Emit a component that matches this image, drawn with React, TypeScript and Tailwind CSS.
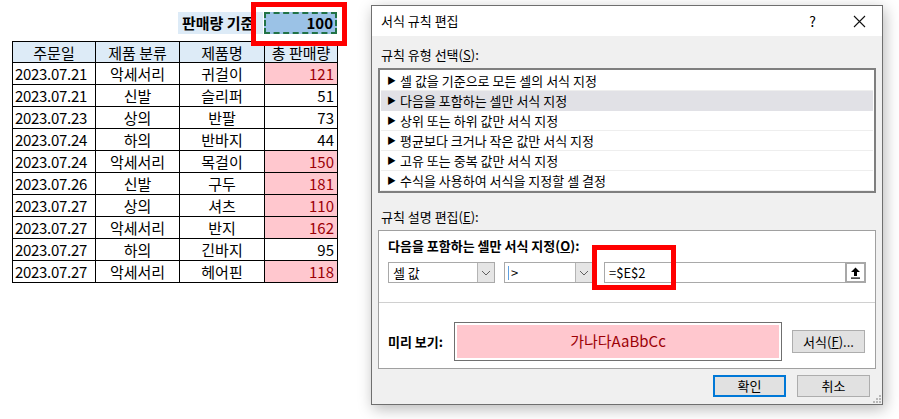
const rows = [
  { date: '2023.07.21', cat: '악세서리', name: '귀걸이', qty: 121 },
  { date: '2023.07.21', cat: '신발', name: '슬리퍼', qty: 51 },
  { date: '2023.07.23', cat: '상의', name: '반팔', qty: 73 },
  { date: '2023.07.24', cat: '하의', name: '반바지', qty: 44 },
  { date: '2023.07.24', cat: '악세서리', name: '목걸이', qty: 150 },
  { date: '2023.07.26', cat: '신발', name: '구두', qty: 181 },
  { date: '2023.07.27', cat: '상의', name: '셔츠', qty: 110 },
  { date: '2023.07.27', cat: '악세서리', name: '반지', qty: 162 },
  { date: '2023.07.27', cat: '하의', name: '긴바지', qty: 95 },
  { date: '2023.07.27', cat: '악세서리', name: '헤어핀', qty: 118 },
];

const ruleTypes = [
  '셀 값을 기준으로 모든 셀의 서식 지정',
  '다음을 포함하는 셀만 서식 지정',
  '상위 또는 하위 값만 서식 지정',
  '평균보다 크거나 작은 값만 서식 지정',
  '고유 또는 중복 값만 서식 지정',
  '수식을 사용하여 서식을 지정할 셀 결정',
];

const THRESHOLD = 100;

function Chevron() {
  return (
    <svg width="10" height="6" viewBox="0 0 10 6" fill="none">
      <path d="M1 1 L5 5 L9 1" stroke="#606060" strokeWidth="1" />
    </svg>
  );
}

function Select({ value, width }: { value: string; width: string }) {
  return (
    <div className={`${width} h-[21px] flex items-stretch border border-[#a9a9a9] bg-white`}>
      <div className="flex-1 flex items-center pl-[4px] text-[13px]">{value}</div>
      <div className="w-[17px] bg-[#e5e5e5] border-l border-[#b4b4b4] flex items-center justify-center">
        <Chevron />
      </div>
    </div>
  );
}

function Sheet() {
  return (
    <div className="w-[371px] shrink-0 pt-[12px] pl-[12px] relative">
      {/* E2 criteria row */}
      <div className="flex h-[22px]">
        <div className="w-[166px]" />
        <div className="w-[85px] bg-[#ddebf7] flex items-center pl-[4px] font-bold text-[15px] whitespace-nowrap overflow-hidden">
          판매량 기준
        </div>
        <div className="w-[73px] ml-[1px] border-2 border-dashed border-[#217346] bg-[#9bc2e6] flex items-center justify-end pr-[2px] font-bold text-[15px]">
          100
        </div>
      </div>

      <table className="mt-[7px] border-collapse table-fixed w-[325px] text-[15px] leading-none">
        <colgroup>
          <col className="w-[83px]" />
          <col className="w-[84px]" />
          <col className="w-[85px]" />
          <col className="w-[73px]" />
        </colgroup>
        <thead>
          <tr className="h-[21px] bg-[#ddebf7]">
            {['주문일', '제품 분류', '제품명', '총 판매량'].map((h) => (
              <th key={h} className="border border-black font-normal text-center p-0">
                {h}
              </th>
            ))}
          </tr>
        </thead>
        <tbody>
          {rows.map((r, i) => {
            const hit = r.qty > THRESHOLD;
            return (
              <tr key={i} className="h-[22px]">
                <td className="border border-black pl-[2px] p-0 tracking-[-0.3px]">{r.date}</td>
                <td className="border border-black text-center p-0">{r.cat}</td>
                <td className="border border-black text-center p-0">{r.name}</td>
                <td
                  className={`border border-black text-right pr-[3px] p-0 ${
                    hit ? 'bg-[#ffc7ce] text-[#9c0006]' : ''
                  }`}
                >
                  {r.qty}
                </td>
              </tr>
            );
          })}
        </tbody>
      </table>

      {/* highlight on criteria cell */}
      <div className="absolute left-[251px] top-[2px] w-[96px] h-[44px] border-[5px] border-[#ff0000]" />
    </div>
  );
}

function Dialog() {
  return (
    <div className="w-[512px] h-[400px] mt-[5px] border border-[#6f6f6f] bg-[#f0f0f0] shadow-[2px_4px_14px_rgba(0,0,0,0.28)] flex flex-col text-[13px] text-black relative">
      {/* title bar */}
      <div className="h-[30px] bg-white flex items-center pl-[9px] shrink-0">
        <span>서식 규칙 편집</span>
        <span className="ml-auto mr-[37px] text-[14px]">?</span>
        <svg width="13" height="13" viewBox="0 0 13 13" className="mr-[16px]">
          <path d="M1 1 L12 12 M12 1 L1 12" stroke="#111" strokeWidth="1.1" />
        </svg>
      </div>

      <div className="flex-1 flex flex-col px-[6px]">
        <div className="pl-[3px] mt-[10px] h-[18px] flex items-center">
          규칙 유형 선택(<u>S</u>):
        </div>

        {/* rule type list */}
        <div className="mt-[4px] h-[125px] border-2 border-[#7f7f7f] bg-white pt-[1px] px-[1px]">
          {ruleTypes.map((t, i) => (
            <div
              key={t}
              className={`h-[20px] flex items-center pl-[6px] ${
                i === 1 ? 'bg-[#e1e1e6]' : 'border-b border-[#eeeeee]'
              }`}
            >
              <span className="text-[9px] mr-[4px]">▶</span>
              <span>{t}</span>
            </div>
          ))}
        </div>

        <div className="pl-[3px] mt-[15px] h-[18px] flex items-center">
          규칙 설명 편집(<u>E</u>):
        </div>

        {/* rule description box */}
        <div className="mt-[4px] h-[139px] border border-[#a0a0a0] bg-white flex flex-col">
          <div className="pl-[9px] mt-[6px] h-[18px] flex items-center font-bold">
            다음을 포함하는 셀만 서식 지정(<u>O</u>):
          </div>
          <div className="flex items-center mt-[7px] pl-[9px] h-[21px]">
            <Select value="셀 값" width="w-[107px]" />
            <div className="ml-[9px] w-[89px] h-[21px] flex items-stretch border border-[#a9a9a9] bg-white">
              <div className="flex-1 flex items-center pl-[3px]">
                <span className="w-px h-[14px] bg-[#5ea0e0] mr-[2px]" />
                &gt;
              </div>
              <div className="w-[17px] bg-[#e5e5e5] border-l border-[#b4b4b4] flex items-center justify-center">
                <Chevron />
              </div>
            </div>
            <div className="ml-[11px] w-[262px] h-[21px] flex items-stretch border border-[#a9a9a9] bg-white">
              <div className="flex-1 flex items-center pl-[4px]">=$E$2</div>
              <div className="w-[21px] border-2 border-[#a8a8a8] bg-white flex items-center justify-center -my-px -mr-px">
                <svg width="11" height="12" viewBox="0 0 11 12">
                  <path d="M5.5 0.5 L10 5 L7 5 L7 9 L4 9 L4 5 L1 5 Z" fill="#000" />
                  <rect x="1" y="10.5" width="9" height="1.2" fill="#000" />
                </svg>
              </div>
            </div>
          </div>

          <div className="mt-[19px] h-px bg-[#d0d0d0]" />

          <div className="flex items-center mt-[19px] pl-[9px]">
            <div className="w-[66px] font-bold">미리 보기:</div>
            <div className="w-[328px] h-[39px] border border-[#6f6f6f] p-[2px] bg-white">
              <div className="w-full h-full bg-[#ffc7ce] text-[#9c0006] flex items-center justify-center text-[15px]">
                가나다AaBbCc
              </div>
            </div>
            <div className="ml-[10px] w-[73px] h-[23px] border border-[#adadad] bg-[#e1e1e1] flex items-center justify-center">
              서식(<u>F</u>)...
            </div>
          </div>
        </div>

        {/* footer buttons */}
        <div className="flex justify-end mt-[6px] pr-[6px]">
          <div className="w-[73px] h-[22px] border-2 border-[#0078d7] bg-[#e1e1e1] flex items-center justify-center">
            확인
          </div>
          <div className="ml-[11px] w-[73px] h-[22px] border border-[#adadad] bg-[#e1e1e1] flex items-center justify-center">
            취소
          </div>
        </div>
      </div>

      {/* resize grip */}
      <svg width="8" height="8" viewBox="0 0 8 8" className="absolute right-[1px] bottom-[1px]">
        <rect x="6" y="0" width="2" height="2" fill="#b8b8b8" />
        <rect x="3" y="3" width="2" height="2" fill="#b8b8b8" />
        <rect x="6" y="3" width="2" height="2" fill="#b8b8b8" />
        <rect x="0" y="6" width="2" height="2" fill="#b8b8b8" />
        <rect x="3" y="6" width="2" height="2" fill="#b8b8b8" />
        <rect x="6" y="6" width="2" height="2" fill="#b8b8b8" />
      </svg>

      {/* highlight on formula */}
      <div className="absolute left-[220px] top-[239px] w-[84px] h-[45px] border-[5px] border-[#ff0000]" />
    </div>
  );
}

export default function App() {
  return (
    <div className="w-[899px] h-[419px] bg-white flex overflow-hidden font-['Noto_Sans_CJK_KR','Noto_Sans',sans-serif] text-black">
      <Sheet />
      <Dialog />
    </div>
  );
}
